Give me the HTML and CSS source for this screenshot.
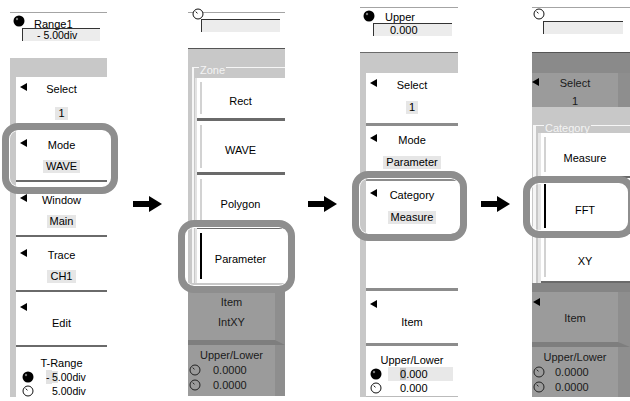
FILE: index.html
```html
<!DOCTYPE html>
<html>
<head>
	<title>Zone Parameter steps</title>
	<link rel="stylesheet" href="styles.css">
</head>
<body>
	<div class="steps">

		<!-- step 1: Mode in the main menu -->
		<div class="panel p1">
			<div class="top">
				<div class="head">
					<svg class="knob" width="12" height="12" viewBox="0 0 12 12"><circle cx="6" cy="6" r="5.5" fill="#000"/><circle cx="4" cy="4" r="1.2" fill="#777"/></svg>
					<span class="cap">Range1</span>
				</div>
				<div class="entry">- 5.00div</div>
			</div>
			<div class="band"></div>
			<div class="menu">
				<div class="btn first">
					<div class="row"><i class="tri"></i><span>Select</span></div>
					<div class="val"><span>1</span></div>
				</div>
				<div class="btn">
					<div class="row"><i class="tri"></i><span>Mode</span></div>
					<div class="val"><span>WAVE</span></div>
				</div>
				<div class="btn">
					<div class="row"><i class="tri"></i><span>Window</span></div>
					<div class="val"><span>Main</span></div>
				</div>
				<div class="btn">
					<div class="row"><i class="tri"></i><span>Trace</span></div>
					<div class="val"><span>CH1</span></div>
				</div>
				<div class="btn single">
					<i class="tri"></i>
					<div class="lbl">Edit</div>
				</div>
				<div class="sect">
					<div class="lbl">T-Range</div>
					<div class="pair">
						<svg class="knob" width="12" height="12" viewBox="0 0 12 12"><circle cx="6" cy="6" r="5.5" fill="#000"/><circle cx="4" cy="4" r="1.2" fill="#777"/></svg>
						<span class="v"><span class="sign cur">-</span><span class="cur">5</span>.00div</span>
					</div>
					<div class="pair">
						<svg class="knob" width="12" height="12" viewBox="0 0 12 12"><circle cx="6" cy="6" r="5" fill="#fff" stroke="#111"/><path d="M3.8 3.6 5.4 5.4" stroke="#111"/></svg>
						<span class="v"><span class="sign"></span>5.00div</span>
					</div>
				</div>
			</div>
		</div>

		<div class="gap">
			<svg width="29" height="16" viewBox="0 0 29 16"><path d="M0 5h16V0l13 8-13 8v-5H0z" fill="#000"/></svg>
		</div>

		<!-- step 2: Zone popup -->
		<div class="panel p2">
			<div class="top">
				<div class="head">
					<svg class="knob" width="12" height="12" viewBox="0 0 12 12"><circle cx="6" cy="6" r="5" fill="#fff" stroke="#111"/><path d="M3.8 3.6 5.4 5.4" stroke="#111"/></svg>
				</div>
				<div class="entry"></div>
			</div>
			<div class="pop">
				<fieldset class="frame">
					<legend>Zone</legend>
					<div class="opts">
						<div class="opt short"><i class="mark"></i><span class="lbl">Rect</span></div>
						<div class="opt"><i class="mark"></i><span class="lbl">WAVE</span></div>
						<div class="opt"><i class="mark"></i><span class="lbl">Polygon</span></div>
						<div class="opt on last"><i class="mark"></i><span class="lbl">Parameter</span></div>
					</div>
				</fieldset>
			</div>
			<div class="dim">
				<div class="dbtn">
					<div class="lbl">Item</div>
					<div class="val"><span>IntXY</span></div>
				</div>
				<div class="dsect">
					<div class="lbl">Upper/Lower</div>
					<div class="pair">
						<svg class="knob" width="12" height="12" viewBox="0 0 12 12"><circle cx="6" cy="6" r="5" fill="none" stroke="#222"/><path d="M3.8 3.6 5.4 5.4" stroke="#222"/></svg>
						<span class="v">0.0000</span>
					</div>
					<div class="pair">
						<svg class="knob" width="12" height="12" viewBox="0 0 12 12"><circle cx="6" cy="6" r="5" fill="none" stroke="#222"/><path d="M3.8 3.6 5.4 5.4" stroke="#222"/></svg>
						<span class="v">0.0000</span>
					</div>
				</div>
			</div>
		</div>

		<div class="gap">
			<svg width="29" height="16" viewBox="0 0 29 16"><path d="M0 5h16V0l13 8-13 8v-5H0z" fill="#000"/></svg>
		</div>

		<!-- step 3: Category in the Parameter menu -->
		<div class="panel p3">
			<div class="top">
				<div class="head">
					<svg class="knob" width="12" height="12" viewBox="0 0 12 12"><circle cx="6" cy="6" r="5.5" fill="#000"/><circle cx="4" cy="4" r="1.2" fill="#777"/></svg>
					<span class="cap">Upper</span>
				</div>
				<div class="entry">0.000</div>
			</div>
			<div class="band"></div>
			<div class="menu">
				<div class="btn first">
					<div class="row"><i class="tri"></i><span>Select</span></div>
					<div class="val"><span>1</span></div>
				</div>
				<div class="btn">
					<div class="row"><i class="tri"></i><span>Mode</span></div>
					<div class="val"><span>Parameter</span></div>
				</div>
				<div class="btn">
					<div class="row"><i class="tri"></i><span>Category</span></div>
					<div class="val"><span>Measure</span></div>
				</div>
				<div class="btn"></div>
				<div class="btn single">
					<i class="tri"></i>
					<div class="lbl">Item</div>
				</div>
				<div class="sect">
					<div class="lbl">Upper/Lower</div>
					<div class="pair">
						<svg class="knob" width="12" height="12" viewBox="0 0 12 12"><circle cx="6" cy="6" r="5.5" fill="#000"/><circle cx="4" cy="4" r="1.2" fill="#777"/></svg>
						<span class="v hl"><span class="cur">0</span>.000</span>
					</div>
					<div class="pair">
						<svg class="knob" width="12" height="12" viewBox="0 0 12 12"><circle cx="6" cy="6" r="5" fill="#fff" stroke="#111"/><path d="M3.8 3.6 5.4 5.4" stroke="#111"/></svg>
						<span class="v">0.000</span>
					</div>
				</div>
			</div>
		</div>

		<div class="gap">
			<svg width="29" height="16" viewBox="0 0 29 16"><path d="M0 5h16V0l13 8-13 8v-5H0z" fill="#000"/></svg>
		</div>

		<!-- step 4: Category popup -->
		<div class="panel p4">
			<div class="top">
				<div class="head">
					<svg class="knob" width="12" height="12" viewBox="0 0 12 12"><circle cx="6" cy="6" r="5" fill="#fff" stroke="#111"/><path d="M3.8 3.6 5.4 5.4" stroke="#111"/></svg>
				</div>
				<div class="entry"></div>
			</div>
			<div class="dim">
				<div class="dband"></div>
				<div class="dbtn dsel">
					<div class="row"><i class="tri"></i><span>Select</span></div>
					<div class="val"><span>1</span></div>
				</div>
			</div>
			<div class="pop">
				<fieldset class="frame">
					<legend>Category</legend>
					<div class="opts">
						<div class="opt m"><i class="mark"></i><span class="lbl">Measure</span></div>
						<div class="opt on f"><i class="mark"></i><span class="lbl">FFT</span></div>
						<div class="opt x"><i class="mark"></i><span class="lbl">XY</span></div>
					</div>
				</fieldset>
			</div>
			<div class="dim">
				<div class="dband low"></div>
				<div class="dbtn single">
					<i class="tri"></i>
					<div class="lbl">Item</div>
				</div>
				<div class="dsect">
					<div class="lbl">Upper/Lower</div>
					<div class="pair">
						<svg class="knob" width="12" height="12" viewBox="0 0 12 12"><circle cx="6" cy="6" r="5" fill="none" stroke="#222"/><path d="M3.8 3.6 5.4 5.4" stroke="#222"/></svg>
						<span class="v">0.0000</span>
					</div>
					<div class="pair">
						<svg class="knob" width="12" height="12" viewBox="0 0 12 12"><circle cx="6" cy="6" r="5" fill="none" stroke="#222"/><path d="M3.8 3.6 5.4 5.4" stroke="#222"/></svg>
						<span class="v">0.0000</span>
					</div>
				</div>
			</div>
		</div>
	</div>

	<!-- rounded marks around the key pressed in each step -->
	<div class="ring r1"></div>
	<div class="ring r2"></div>
	<div class="ring r3"></div>
	<div class="ring r4"></div>
</body>
</html>
```

FILE: styles.css
```css
*{
	box-sizing: border-box;
}
html *{
	margin: 0;
	padding: 0;
}
body{
	position: relative;
	width: 630px;
	height: 401px;
	overflow: hidden;
	background: #fff;
	font-family: "Liberation Sans", Arial, sans-serif;
	font-size: 11px;
	color: #000;
}
.steps{
	display: grid;
	grid-template-columns: 97px 81px 97px 75px 98px 74px 98px;
	align-items: start;
	padding-left: 10px;
}
.gap{
	display: flex;
	justify-content: center;
	padding-top: 196px;
}
.panel{
	background: #c8c8c8;
}
.p1,.p2{
	margin-top: 12px;
}
.p3,.p4{
	margin-top: 7px;
}

/* top entry box */
.top{
	background: #fff;
	border-top: 1px solid #a4a4a4;
}
.p1 .top{ height: 46px; }
.p2 .top{ height: 36px; }
.p3 .top,.p4 .top{ height: 45px; }
.head{
	display: flex;
	align-items: flex-start;
}
.knob{
	display: block;
	flex: none;
}
.cap{
	line-height: 12px;
	margin-left: 9px;
}
.p1 .head{ height: 15px; padding: 2px 0 0 3px; }
.p1 .cap{ margin-top: 3px; }
.p2 .head{ height: 6px; padding-left: 4px; }
.p2 .head .knob{ margin-top: -5px; }
.p3 .head{ height: 15px; padding: 2px 0 0 3px; }
.p3 .cap{ margin-top: 1px; margin-left: 10px; }
.p4 .head{ height: 13px; padding-left: 1px; }

.entry{
	height: 13px;
	border-top: 1px solid #333;
	border-left: 1px solid #333;
	background: #ececec;
	line-height: 12px;
	white-space: pre;
}
.p1 .entry{ margin: 0 7px 0 12px; padding-left: 14px; font-size: 10.5px; }
.p2 .entry{ margin: 0 5px 0 13px; }
.p3 .entry{ margin: 0 6px 0 13px; padding-left: 16px; }
.p4 .entry{ margin: 0 7px 0 11px; }

.band{ height: 19px; }
.p3 .band{ height: 21px; border-top: 1px solid #6a6a6a; }

/* soft keys */
.menu{
	padding-left: 6px;
}
.btn{
	height: 55px;
	padding-top: 11px;
	background: #fff;
	border-bottom: 2px solid #6a6a6a;
}
.p3 .btn{
	padding-top: 7px;
	border-bottom: 3px solid #8c8c8c;
}
.row{
	display: grid;
	grid-template-columns: 16px 1fr 16px;
	align-items: start;
	line-height: 14px;
}
.row span{
	text-align: center;
}
.tri{
	display: block;
	width: 0;
	height: 0;
	margin: 1px 0 0 4px;
	border-top: 4px solid transparent;
	border-bottom: 4px solid transparent;
	border-right: 7px solid #000;
}
.lbl{
	line-height: 14px;
	text-align: center;
}
.val{
	margin-top: 8px;
	line-height: 13px;
	text-align: center;
}
.val span{
	display: inline-block;
	padding: 0 3px;
	background: #e6e6e6;
}
.p3 .val{ margin-top: 9px; }
.btn.first{ height: 50px; padding-top: 5px; }
.first .val{ margin-top: 11px; }
.p3 .btn.first{ height: 53px; padding-top: 5px; }
.p3 .first .val{ margin-top: 9px; }
.single .tri{ margin-top: 0; }
.single .lbl{ margin-top: 5px; }
.p3 .btn.single{ padding-top: 9px; }
.p3 .single .lbl{ margin-top: 7px; }

.sect{
	height: 50px;
	padding-top: 9px;
	background: #fff;
}
.p3 .sect{
	height: 51px;
	padding-top: 7px;
	border-bottom: 1px solid #bbb;
}
.pair{
	display: flex;
	align-items: center;
	height: 14px;
	padding-left: 6px;
	line-height: 14px;
}
.p1 .v{
	margin-left: 12px;
	font-size: 10.5px;
}
.sign{
	display: inline-block;
	width: 6px;
}
.cur{
	background: #e2e2e2;
}
.p3 .pair{ padding-left: 4px; }
.p3 .v{
	width: 65px;
	margin-left: 6px;
	padding-left: 12px;
}
.p3 .hl{ background: #e8e8e8; }
.p3 .hl .cur{ background: #c4c4c4; }

/* popup with option keys */
.pop{
	background: #c8c8c8;
	border-top: 1px solid #555;
	padding: 12px 0 4px;
}
.frame{
	min-width: 0;
	border: none;
	border-top: 1px solid #f6f6f6;
	border-left: 2px solid #f6f6f6;
	margin-left: 4px;
	padding: 4px 0 0 1px;
}
legend{
	color: #f4f4f4;
	line-height: 8px;
	padding: 5px 1px 0;
	margin-left: 4px;
}
.opts{
	border-left: 2px solid #e2e2e2;
}
.opt{
	display: flex;
	height: 54px;
	background: #fff;
	border-bottom: 3px solid #6a6a6a;
}
.opt.short{ height: 43px; }
.opt.last{ border-bottom: none; }
.mark{
	width: 2px;
	margin: 4px 0 4px 3px;
	background: #d2d2d2;
}
.opt.on .mark{
	background: #000;
}
.opt .lbl{
	flex: 1;
	align-self: center;
	padding: 6px 6px 0 0;
}
.p4 .pop{
	border-top: none;
	padding: 12px 0 0;
}
.p4 .frame{
	margin-left: 1px;
	border-left-width: 3px;
	padding: 1px 0 0 2px;
}
.p4 legend{ margin-left: 6px; }
.p4 .opts{ border-left: 3px solid #e6e6e6; }
.p4 .opt{ border-bottom: 2px solid #6a6a6a; }
.p4 .opt.m{ height: 45px; }
.p4 .opt.f{ height: 56px; }
.p4 .opt.f .lbl{ padding-top: 10px; }
.p4 .opt.x{ height: 49px; }

/* dimmed menu behind popups */
.dim{
	background: #9b9b9b;
	color: #1a1a1a;
}
.dim .val span{
	background: none;
}
.dbtn{
	height: 58px;
	padding-top: 8px;
	border-bottom: 5px solid #7e7e7e;
	border-right: 10px solid #8e8e8e;
}
.dim .val{ margin-top: 7px; }
.dsect{
	height: 51px;
	padding-top: 3px;
	border-right: 10px solid #8e8e8e;
}
.dsect .pair{
	height: 15px;
	padding-left: 1px;
}
.dsect .v{ margin-left: 12px; }
.dband{
	height: 21px;
	background: #8a8a8a;
	border-top: 1px solid #555;
}
.dband.low{
	height: 9px;
	border-top: none;
	background: #858585;
}
.dsel{
	height: 34px;
	overflow: hidden;
	padding-top: 3px;
	border-bottom: none;
	border-right-width: 12px;
}
.dsel .tri{ margin: 2px 0 0 0; }
.dsel .val{ margin-top: 5px; }
.p4 .dbtn.single{
	height: 55px;
	padding-top: 6px;
	border-right-width: 12px;
}
.p4 .single .tri{ margin-left: 1px; }
.p4 .dsect{
	height: 50px;
	border-right-width: 12px;
}
.p4 .dsect .v{ margin-left: 10px; }

/* highlight rings */
.ring{
	position: absolute;
	border: 7px solid #8e8e8e;
	border-radius: 16px;
	box-shadow: inset 0 0 0 1px #fff;
}
.r1{ left: 2px; top: 123px; width: 116px; height: 71px; }
.r2{ left: 178px; top: 220px; width: 117px; height: 73px; }
.r3{ left: 352px; top: 171px; width: 115px; height: 70px; }
.r4{ left: 523px; top: 176px; width: 112px; height: 62px; }
```
